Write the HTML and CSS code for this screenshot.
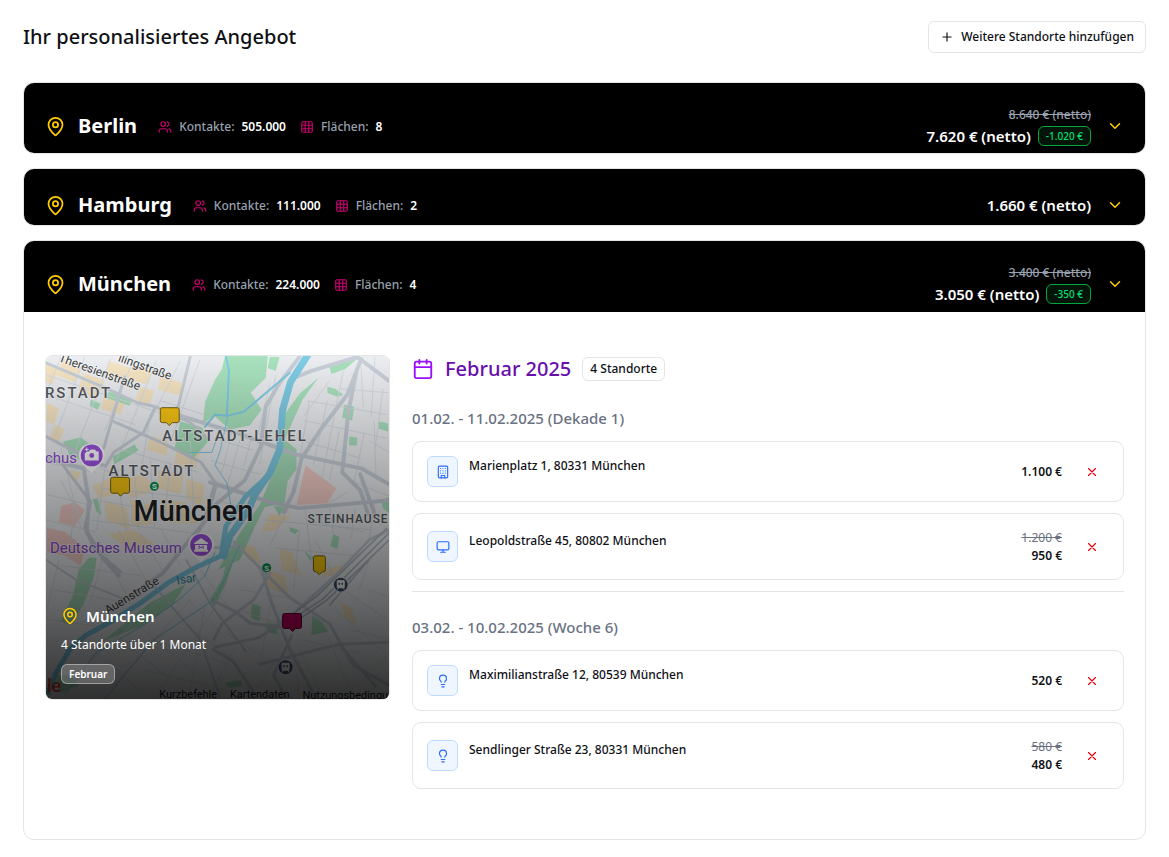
FILE: index.html
```html
<!DOCTYPE html>
<html lang="de">
<head>
<meta charset="utf-8">
<meta name="viewport" content="width=device-width, initial-scale=1">
<title>Ihr personalisiertes Angebot</title>
<link rel="stylesheet" href="styles.css">
</head>
<body>
<svg class="sprite" aria-hidden="true">
  <symbol id="pin" viewBox="0 0 24 24"><path d="M20 10c0 4.993-5.539 10.193-7.399 11.799a1 1 0 0 1-1.202 0C9.539 20.193 4 14.993 4 10a8 8 0 0 1 16 0"/><circle cx="12" cy="10" r="3"/></symbol>
  <symbol id="users" viewBox="0 0 24 24"><path d="M16 21v-2a4 4 0 0 0-4-4H6a4 4 0 0 0-4 4v2"/><circle cx="9" cy="7" r="4"/><path d="M22 21v-2a4 4 0 0 0-3-3.87M16 3.13a4 4 0 0 1 0 7.75"/></symbol>
  <symbol id="grid" viewBox="0 0 24 24"><rect x="3" y="3" width="18" height="18" rx="2"/><path d="M3 9h18M3 15h18M9 3v18M15 3v18"/></symbol>
  <symbol id="chevron" viewBox="0 0 24 24"><path d="m6 9 6 6 6-6"/></symbol>
  <symbol id="plus" viewBox="0 0 24 24"><path d="M5 12h14M12 5v14"/></symbol>
  <symbol id="cross" viewBox="0 0 24 24"><path d="M18 6 6 18M6 6l12 12"/></symbol>
  <symbol id="calendar" viewBox="0 0 24 24"><path d="M8 2v4M16 2v4"/><rect x="3" y="4" width="18" height="18" rx="2"/><path d="M3 10h18"/></symbol>
  <symbol id="building" viewBox="0 0 24 24"><rect x="4" y="2" width="16" height="20" rx="2"/><path d="M9 22v-4h6v4M8 6h.01M16 6h.01M12 6h.01M12 10h.01M12 14h.01M16 10h.01M16 14h.01M8 10h.01M8 14h.01"/></symbol>
  <symbol id="monitor" viewBox="0 0 24 24"><rect x="2" y="3" width="20" height="14" rx="2"/><path d="M8 21h8M12 17v4"/></symbol>
  <symbol id="bulb" viewBox="0 0 24 24"><path d="M15 14c.2-1 .7-1.700 1.500-2.500 1-.9 1.500-2.200 1.500-3.500A6 6 0 0 0 6 8c0 1 .2 2.200 1.500 3.500.7.7 1.300 1.500 1.500 2.500M9 18h6M10 22h4"/></symbol>
</svg>

<main class="page">
  <header class="page-head">
    <h1 class="page-title">Ihr personalisiertes Angebot</h1>
    <button class="add-button" type="button"><svg class="icon icon-sm"><use href="#plus"/></svg>Weitere Standorte hinzufügen</button>
  </header>

  <section class="city">
    <div class="city-head">
      <svg class="icon icon-pin"><use href="#pin"/></svg>
      <h2 class="city-name">Berlin</h2>
      <div class="stats">
        <span class="stat"><svg class="icon icon-sm"><use href="#users"/></svg>Kontakte: <strong>505.000</strong></span>
        <span class="stat"><svg class="icon icon-sm"><use href="#grid"/></svg>Flächen: <strong>8</strong></span>
      </div>
      <div class="totals">
        <s class="total-old">8.640 € (netto)</s>
        <div class="total-line"><span class="total">7.620 € (netto)</span><span class="saving">-1.020 €</span></div>
      </div>
      <button class="toggle" type="button" aria-label="Berlin aufklappen"><svg class="icon icon-chevron"><use href="#chevron"/></svg></button>
    </div>
  </section>

  <section class="city">
    <div class="city-head">
      <svg class="icon icon-pin"><use href="#pin"/></svg>
      <h2 class="city-name">Hamburg</h2>
      <div class="stats">
        <span class="stat"><svg class="icon icon-sm"><use href="#users"/></svg>Kontakte: <strong>111.000</strong></span>
        <span class="stat"><svg class="icon icon-sm"><use href="#grid"/></svg>Flächen: <strong>2</strong></span>
      </div>
      <div class="totals">
        <div class="total-line"><span class="total">1.660 € (netto)</span></div>
      </div>
      <button class="toggle" type="button" aria-label="Hamburg aufklappen"><svg class="icon icon-chevron"><use href="#chevron"/></svg></button>
    </div>
  </section>

  <section class="city">
    <div class="city-head city-head-open">
      <svg class="icon icon-pin"><use href="#pin"/></svg>
      <h2 class="city-name">München</h2>
      <div class="stats">
        <span class="stat"><svg class="icon icon-sm"><use href="#users"/></svg>Kontakte: <strong>224.000</strong></span>
        <span class="stat"><svg class="icon icon-sm"><use href="#grid"/></svg>Flächen: <strong>4</strong></span>
      </div>
      <div class="totals">
        <s class="total-old">3.400 € (netto)</s>
        <div class="total-line"><span class="total">3.050 € (netto)</span><span class="saving">-350 €</span></div>
      </div>
      <button class="toggle" type="button" aria-label="München zuklappen"><svg class="icon icon-chevron"><use href="#chevron"/></svg></button>
    </div>

    <div class="city-body">
      <div class="map">
        <svg class="map-art" viewBox="45 355 345 345" preserveAspectRatio="xMidYMid slice" role="img" aria-label="Karte von München">
          <rect x="45" y="355" width="345" height="345" fill="#eceef1"/>
          <g fill="#f7e6c4">
            <path d="M45 362l14 6-8 16-6-3zM62 358l18 10-6 14-18-8zM82 372l22 8-8 18-18-8zM108 360l24 8-5 14-22-8zM104 392l22 6-6 16-20-6zM132 364l20 6-5 14-18-5zM46 402l12 6-5 16-8-3zM54 424l10 5-7 14-9-5zM160 375l24 8-4 12-22-6zM140 386l14 4-5 14-14-5z"/>
            <path d="M150 435l18 6-2 14-20-6zM176 450l24 2-4 16-22-2zM120 480l24-6 10 16-24 8zM158 470l26 4-4 20-22-6zM104 500l22 8 4 22-24-10zM130 500l20 4 2 20-20 2zM160 498l24 4 14 22-30-2zM92 486l16-8 8 16-18 4zM186 478l18 6-2 24-16-10zM108 534l26-4 20 14-24 8zM70 470l10 2-4 10-8-3z"/>
            <path d="M240 542l16 6 6 16-14-4zM280 548l12 4 10 24-20-6zM266 570l20 6 2 20-22-10zM322 570l26-6-2 8-22 6zM340 602l12 6 6 18-12-8zM270 514l22 2-16 14-14 2z"/>
          </g>
          <g fill="#f6cfc9"><path d="M306 465l12 9 19 14-9 15-31 2zM60 506l14-4 10 8-10 16-16-4zM46 528l18 4 20 16-4 18-16-10-18-4z"/></g>
          <g fill="#a9e2be">
            <path d="M225 355h43l-2 22-15 15 11 17-12 16-20 4-16-14-11 8 2-22 10-22 7-11z"/>
            <path d="M319 377l-16 22-18 40 12 10v20l-9 12-3 22-20 4-9 18-16 35-22 10 24-40 18-25 20-50 4-40 16-22z"/>
            <path d="M180 421l22 6 6 14-14 16-20-8zM62 441l18-4 14 10-2 14-22-4zM108 391l24 8-3 6-24-8zM90 399l10 4-3 6-8-4zM112 456l22-12 4 6-24 14zM92 499l5-1 4 17-5-3zM270 356h10l-4 14-8-3zM330 366l18-8 12-2-14 12-14 5zM328 386l8 2 8 6-6 2-10-4zM345 404l10 2-2 14-10-3zM350 436l8 1v8h-8zM380 421l9 2v8l-10-3zM382 500l8-3v16l-6-5zM274 506l10 1-4 9z"/>
            <path d="M88 558h8l-3 20-10 26-13 22-10-4 12-26 6-26zM150 603l36-19-14 22-30 20-40 16zM334 534l6 3-2 12-7-3zM290 527l9 3-3 4-6-3zM305 552l10 6-4 3zM252 604l9 3-1 15-9-4zM266 623l10 2 2 10-10-2zM313 616l9 6 7 10-17 4zM228 558l8-4-10 30-12 24-4-8 12-20zM55 676h14l10 10-20 8zM225 684l16-3 2 6-14 2z"/>
          </g>
          <g fill="none" stroke="#d8dde3" stroke-width="1">
            <path d="M45 374l120 40M45 394l90 30M60 356l-15 36M84 356l-30 80M110 358l-40 104M134 356l-30 74M156 360l-40 100M50 440l70 38M45 462l50 10M60 480l30 56M45 494l40 10M45 520l50 12M74 500l-6 60M104 470l-8 60M116 476l10 56M134 470l4 60M150 460l4 66M170 462l-6 60M190 440l4 80M96 500l104 18M90 520l110 14M100 488l100 10M118 448l80 24M150 414l-10 60M180 360l-30 60M200 358l-30 84M160 400l44 14M60 448l20 80"/>
            <path d="M214 438l40 12M210 460l50 14M212 480l40 14M240 440l-14 50M232 432l-10 40M252 436l-8 30M216 500l28 8M270 384l-12 50M276 374l-16 90M330 380l-26 36M344 370l-22 110M362 366l2 40M376 356l-4 60M308 400l80 14M305 420l84 18M302 440l60 18M310 400l-10 60M328 400l-14 64M340 430l-10 50M365 432l-10 50M375 420l2 60M384 388l-8 60M340 388l50 4M300 462l-8 30M348 492l-20 12M370 440l20 12M350 480l40 16M330 504l4 30M356 508l-4 30M376 500l-6 40M315 522l50 10M305 505l8 60M290 506l-20 40M275 548l80 8M264 520l110 10M254 560l20 40M300 530l-6 60M316 540l20 40M240 590l46 8M238 610l50 18M272 596l-10 60M224 632l40 26M344 590l44 30M336 610l50 44M350 630l40 10M330 640l20 50M300 640l60 14M370 560l-10 30M370 590l20 8"/>
            <path d="M98 540l30 60M118 530l30 56M140 534l24 40M160 528l20 38M60 566l80 10M52 590l80 14M46 620l60 8M58 560l-12 50M104 552l-14 50M120 640l50 40M140 628l60 50M92 650l50 44M80 670l80-70M110 690l80-90M160 690l54-80M186 598l40 40M176 620l50 34M200 570l30 40M150 640l76 24M140 670l90 22M206 600l-16 90M240 640l-30 56M300 690l-10-50M320 690l-20-40M350 694l40-40M256 690l20-30"/>
          </g>
          <g fill="none" stroke="#c9d0d9" stroke-linecap="round" stroke-linejoin="round">
            <path stroke-width="3" d="M45 436l60 30 8-14 30-20 12-26 35 16 18 16M155 406l-18-4-30-14-62-26M190 356l-14 58M111 420l-8 28M124 376l-13 44 50 22 40 20 14 20-8 30-10 24M60 462l30 40-6 26 10 22 26 22"/>
            <path stroke-width="4" d="M45 458l38 10 5 34-2 30 16 26 16 18M176 414l60 18 60 22 66 14 28 16M210 482l60 20 30 6 90-8M216 484l-10 36-20 24-24 30-32 22"/>
            <path stroke-width="4" d="M300 356l-20 26-14 24-5 40-16 34-36 30M292 378l20-8 46-14M358 356l32 24M362 358l-14 36-26 34-20 30-8 34-10 20M357 372l-8 40-6 60 18 18 8 24M361 474l14 38"/>
            <path stroke-width="3" d="M234 542l22 22 34 34 40 26 24 42 36 20M238 546l-23 2M390 530l-20 10-32 34-44 40-34 24-45 10M262 570l8 28 20 52M270 574l-16 26-32 24-8 16M215 602l20 10 16 12 30 4M292 636l-18 40 12 22M290 650l26 48M260 665l80-20 50-2M340 645l36 42M213 650l20 12 20 30"/>
            <path stroke-width="2" d="M186 560l24 44 36 48M150 582l50 58 20 58M45 560l30 20 50 20"/>
          </g>
          <g fill="none" stroke="#b3bac5" stroke-width="1.500"><path d="M390 533l-66 66-30 20M390 540l-62 60-30 21M388 528l-70 68-24 18M370 560l-40 46"/></g>
          <g fill="none" stroke="#7fcde6" stroke-linecap="round" stroke-linejoin="round">
            <path stroke-width="7" d="M309 353l-18 28-8 28-3 40-10 24-14 20-8 18-18 25-6 20"/>
            <path stroke-width="5" d="M270 474l-24 22-20 30-5 30-24 11-29 16-26 19-28 18-29 16-16 14-14 24-8 20"/>
            <path stroke-width="2" d="M226 356l3 14-2 45-12-1-10 12M290 372l-20 17-26 22-16 4"/>
            <path stroke-width="1" d="M228 415l-8 36-5 14 12 18 4 22M190 452h22l4-12M215 552l-10 24-26 24-36 26-48 28-30 40M240 545l-14 32-10 20M104 700l50-60 60-40"/>
          </g>
          <g class="map-street">
            <text x="57" y="360" transform="rotate(20 57 360)">Theresienstraße</text>
            <text x="117" y="360" transform="rotate(20 117 360)">llingstraße</text>
            <text x="107" y="615" transform="rotate(-31 107 615)">Auenstraße</text>
            <text class="map-river" x="177" y="585" transform="rotate(-10 177 585)">Isar</text>
          </g>
          <g class="map-district">
            <text x="44" y="397">RSTADT</text>
            <text x="162" y="441">ALTSTADT-LEHEL</text>
            <text x="108" y="476">ALTSTADT</text>
            <text class="map-district-small" x="308" y="523">STEINHAUSEN</text>
          </g>
          <text class="map-city" x="133" y="521">München</text>
          <g class="map-poi"><text x="44" y="463">chus</text><text x="49" y="553">Deutsches Museum</text></g>
          <g>
            <path d="M91 443c-8 0-13 5-13 12 0 8 8 11 13 18 5-7 13-10 13-18 0-7-5-12-13-12z" fill="#fff"/><circle cx="91" cy="455" r="11" fill="#9b51e0"/>
            <path d="M86 451h2l2-2h4l2 2h2v9H84v-7" fill="#fff"/><circle cx="91" cy="455" r="2.500" fill="#9b51e0"/><path d="M84 449h4M86 447v4" stroke="#fff"/>
            <path d="M201 533c-8 0-13 5-13 12 0 8 8 11 13 18 5-7 13-10 13-18 0-7-5-12-13-12z" fill="#fff"/><circle cx="201" cy="545" r="11" fill="#9b51e0"/>
            <path d="M194 543l7-5 7 5v1h-14zM195 545h12v5h-12zM194 550h14v2h-14z" fill="#fff"/><path d="M199 549v-3l2 2 2-2v3" fill="none" stroke="#9b51e0"/>
          </g>
          <g stroke="#74601a" stroke-width="1">
            <path d="M162 407h15q2 0 2 2v11q0 2-2 2h-5l-3 3-3-3h-4q-2 0-2-2v-11q0-2 2-2z" fill="#f5c211"/>
            <path d="M112 477h15q2 0 2 2v12q0 2-2 2h-4l-3 3-3-3h-5q-2 0-2-2v-12q0-2 2-2z" fill="#f5c211"/>
            <path d="M316 556h8q2 0 2 2v12q0 2-2 2h-1l-3 3-3-3h-1q-2 0-2-2v-12q0-2 2-2z" fill="#fccc0a"/>
            <path d="M285 614h15q2 0 2 2v11q0 2-2 2h-4l-3 3-3-3h-5q-2 0-2-2v-11q0-2 2-2z" fill="#c8005f" stroke="#5d0030"/>
          </g>
          <g class="map-sbahn"><circle cx="154" cy="486" r="4.500"/><circle cx="267" cy="568" r="4.500"/><text x="154" y="489">S</text><text x="267" y="571">S</text></g>
          <g><circle cx="341.500" cy="585" r="8" fill="#e8edf5"/><circle cx="341.500" cy="585" r="7" fill="#3d526e"/><circle cx="286" cy="668" r="8" fill="#e8edf5"/><circle cx="286" cy="668" r="7" fill="#3d526e"/>
            <path d="M338 581h7v7h-7zM338 590l2-2M345 590l-2-2M282.500 664h7v7h-7zM282.500 673l2-2M289.500 673l-2-2" fill="#fff" stroke="#fff"/><path d="M340 583v2M343 583v2M284.500 666v2M287.500 666v2" stroke="#3d526e" stroke-width="1.500"/>
          </g>
          <text class="map-brand" x="46" y="693">le</text>
          <g class="map-legal"><text x="159" y="699">Kurzbefehle</text><text x="230" y="699">Kartendaten</text><text x="303" y="700">Nutzungsbedingungen</text></g>
        </svg>
        <div class="map-caption">
          <div class="map-title"><svg class="icon icon-map-pin"><use href="#pin"/></svg>München</div>
          <p class="map-text">4 Standorte über 1 Monat</p>
          <span class="map-tag">Februar</span>
        </div>
      </div>

      <div class="plan">
        <div class="plan-head">
          <svg class="icon icon-calendar"><use href="#calendar"/></svg>
          <h3 class="plan-month">Februar 2025</h3>
          <span class="count">4 Standorte</span>
        </div>

        <section class="period">
          <h4 class="period-title">01.02. - 11.02.2025 (Dekade 1)</h4>
          <ul class="spots">
            <li class="spot">
              <span class="spot-icon"><svg class="icon icon-sm"><use href="#building"/></svg></span>
              <span class="spot-address">Marienplatz 1, 80331 München</span>
              <span class="spot-price">1.100 €</span>
              <button class="remove" type="button" aria-label="Marienplatz 1 entfernen"><svg class="icon icon-sm"><use href="#cross"/></svg></button>
            </li>
            <li class="spot">
              <span class="spot-icon"><svg class="icon icon-sm"><use href="#monitor"/></svg></span>
              <span class="spot-address">Leopoldstraße 45, 80802 München</span>
              <span class="spot-price"><s>1.200 €</s>950 €</span>
              <button class="remove" type="button" aria-label="Leopoldstraße 45 entfernen"><svg class="icon icon-sm"><use href="#cross"/></svg></button>
            </li>
          </ul>
        </section>

        <section class="period">
          <h4 class="period-title">03.02. - 10.02.2025 (Woche 6)</h4>
          <ul class="spots">
            <li class="spot">
              <span class="spot-icon"><svg class="icon icon-sm"><use href="#bulb"/></svg></span>
              <span class="spot-address">Maximilianstraße 12, 80539 München</span>
              <span class="spot-price">520 €</span>
              <button class="remove" type="button" aria-label="Maximilianstraße 12 entfernen"><svg class="icon icon-sm"><use href="#cross"/></svg></button>
            </li>
            <li class="spot">
              <span class="spot-icon"><svg class="icon icon-sm"><use href="#bulb"/></svg></span>
              <span class="spot-address">Sendlinger Straße 23, 80331 München</span>
              <span class="spot-price"><s>580 €</s>480 €</span>
              <button class="remove" type="button" aria-label="Sendlinger Straße 23 entfernen"><svg class="icon icon-sm"><use href="#cross"/></svg></button>
            </li>
          </ul>
        </section>
      </div>
    </div>
  </section>
</main>
</body>
</html>
```
FILE: styles.css
```css
*, *::before, *::after { box-sizing: border-box; }

body {
  margin: 0;
  background: #fff;
  color: #0f1115;
  font: 500 12px/18px "Noto Sans", "Open Sans", sans-serif;
}

h1, h2, h3, h4, p, ul { margin: 0; padding: 0; font: inherit; }
ul { list-style: none; }
button { font: inherit; color: inherit; cursor: pointer; }

.sprite { display: none; }

.icon {
  flex: none;
  fill: none;
  stroke: currentColor;
  stroke-width: 2;
  stroke-linecap: round;
  stroke-linejoin: round;
}
.icon-sm { width: 14px; height: 14px; }
.icon-pin { width: 21px; height: 21px; color: #fc0; }
.icon-map-pin { width: 18px; height: 18px; color: #fc0; }
.icon-chevron { width: 18px; height: 18px; }
.icon-calendar { width: 22px; height: 22px; color: #9810fa; }

.page {
  display: flex;
  flex-direction: column;
  gap: 14px;
  padding: 21px 23px 16px;
}

.page-head {
  display: flex;
  align-items: center;
  justify-content: space-between;
  margin-bottom: 15px;
}
.page-title { font-size: 20px; line-height: 32px; }
.add-button {
  display: flex;
  align-items: center;
  gap: 7px;
  height: 32px;
  padding: 0 11px;
  border: 1px solid #e5e5e5;
  border-radius: 6px;
  background: #fff;
}

.city {
  border: 1px solid #e5e5e5;
  border-radius: 11px;
  overflow: hidden;
}
.city-head {
  display: flex;
  align-items: center;
  padding: 22px 21px 6px;
  background: #000;
  color: #fff;
}
.city-head-open { padding-bottom: 7px; }
.city-name {
  margin: 0 21px 0 12px;
  font-size: 20px;
  font-weight: 700;
  line-height: 28px;
}
.stats { display: flex; gap: 14px; padding-top: 1px; color: #99a1af; }
.stat { display: flex; align-items: center; gap: 7px; }
.stat .icon { color: #c8006e; }
.stat strong { color: #fff; font-weight: 600; }

.totals { margin-left: auto; text-align: right; }
.total-old { display: block; line-height: 20px; color: #99a1af; }
.total-line { display: flex; align-items: center; justify-content: flex-end; gap: 7px; line-height: 22px; }
.total { font-size: 15px; font-weight: 600; }
.saving {
  padding: 0 7px;
  border: 1px solid #00a63e;
  border-radius: 6px;
  background: #03150b;
  color: #05df72;
  font-size: 10px;
  line-height: 18px;
}
.toggle {
  display: flex;
  margin-left: 15px;
  padding: 0;
  border: 0;
  background: none;
  color: #fc0;
}

.city-body {
  display: grid;
  grid-template-columns: repeat(3, 1fr);
  align-items: start;
  gap: 22px;
  padding: 43px 21px 50px;
}

.map {
  display: grid;
  aspect-ratio: 1;
  border: 1px solid #e5e5e5;
  border-radius: 7px;
  overflow: hidden;
}
.map-art, .map-caption { grid-area: 1 / 1; min-width: 0; min-height: 0; }
.map-art { width: 100%; height: 100%; font-family: Roboto, sans-serif; font-weight: 400; }
.map-art text { paint-order: stroke; stroke: rgba(255, 255, 255, .6); stroke-width: 2px; stroke-linejoin: round; }
.map-street { font-size: 12px; fill: #3c4043; }
.map-art .map-river { fill: #2a8fae; stroke: none; }
.map-district { font-size: 15px; font-weight: 500; letter-spacing: 2px; fill: #54585e; }
.map-district-small { font-size: 12px; letter-spacing: 1px; }
.map-city { font-size: 29px; font-weight: 500; fill: #202124; }
.map-poi { font-size: 15px; fill: #8d47d6; }
.map-sbahn { fill: #0a9250; }
.map-art .map-sbahn text { fill: #fff; stroke: none; font-size: 8px; font-weight: 700; text-anchor: middle; }
.map-art .map-brand { font-size: 18px; font-weight: 500; fill: #ea4335; stroke: none; }
.map-art .map-legal { font-size: 11px; fill: #111; }
.map-art .map-legal text { stroke: none; }
.map-caption {
  display: flex;
  flex-direction: column;
  align-items: flex-start;
  justify-content: flex-end;
  padding: 15px;
  background: linear-gradient(rgba(0, 0, 0, 0), rgba(0, 0, 0, .8));
  color: #fff;
}
.map-title { display: flex; align-items: center; gap: 7px; font-size: 15px; font-weight: 600; line-height: 24px; }
.map-text { margin: 7px 0 9px; font-weight: 400; line-height: 20px; }
.map-tag {
  padding: 0 7px;
  border: 1px solid rgba(255, 255, 255, .4);
  border-radius: 6px;
  background: rgba(255, 255, 255, .2);
  font-size: 10px;
  font-weight: 600;
}

.plan { grid-column: span 2; }
.plan-head { display: flex; align-items: center; gap: 11px; height: 28px; }
.plan-month { font-size: 20px; color: #6a0dad; }
.count { padding: 2px 7px; border: 1px solid #e5e5e5; border-radius: 6px; }

.period { padding-top: 25px; }
.period + .period { margin-top: 11px; border-top: 1px solid #e5e5e5; }
.period-title { margin-bottom: 12px; color: #6a7282; font-size: 15px; line-height: 21px; }
.spots { display: grid; gap: 11px; }
.spot {
  display: flex;
  align-items: center;
  padding: 14px;
  border: 1px solid #e5e5e5;
  border-radius: 9px;
}
.spot-icon {
  display: grid;
  place-items: center;
  width: 31px;
  height: 31px;
  margin-right: 11px;
  border: 1px solid #bedbff;
  border-radius: 6px;
  background: #eff6ff;
  color: #2b6bff;
}
.spot-address { flex: 1; padding-bottom: 11px; }
.spot-price { text-align: right; font-weight: 600; }
.spot-price s { display: block; line-height: 19px; color: #6a7282; font-weight: 400; }
.remove {
  display: grid;
  place-items: center;
  width: 34px;
  height: 28px;
  margin-left: 13px;
  padding: 0;
  border: 0;
  background: none;
  color: #e7000b;
}
```
